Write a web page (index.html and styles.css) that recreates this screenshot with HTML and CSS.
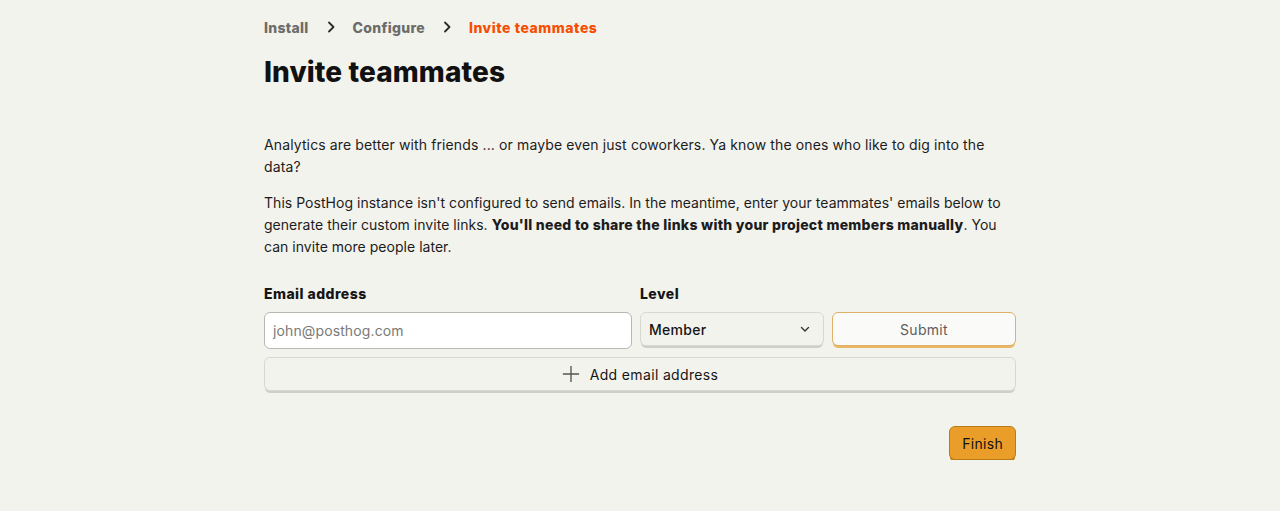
FILE: index.html
```html
<!DOCTYPE html>
<html lang="en">
<head>
<meta charset="utf-8">
<title>Invite teammates</title>
<link rel="stylesheet" href="styles.css">
</head>
<body>
<main class="page">
  <nav class="crumbs">
    <span class="crumb">Install</span>
    <svg class="chev" viewBox="0 0 16 16" width="16" height="16"><path d="M6 3.5 10.5 8 6 12.5" fill="none" stroke="currentColor" stroke-width="1.8" stroke-linecap="round" stroke-linejoin="round"/></svg>
    <span class="crumb">Configure</span>
    <svg class="chev" viewBox="0 0 16 16" width="16" height="16"><path d="M6 3.5 10.5 8 6 12.5" fill="none" stroke="currentColor" stroke-width="1.8" stroke-linecap="round" stroke-linejoin="round"/></svg>
    <span class="crumb active">Invite teammates</span>
  </nav>
  <h1 class="title">Invite teammates</h1>
  <section class="intro">
    <p class="p1">Analytics are better with friends ... or maybe even just coworkers. Ya know the ones who like to dig into the data?</p>
    <p class="p2">This PostHog instance isn't configured to send emails. In the meantime, enter your teammates' emails below to generate their custom invite links. <strong>You'll need to share the links with your project members manually</strong>. You can invite more people later.</p>
  </section>
  <form class="invite">
    <div class="row">
      <label class="label">Email address</label>
      <label class="label">Level</label>
      <span></span>
      <input class="email" type="text" placeholder="john@posthog.com">
      <div class="select">
        <span>Member</span>
        <svg viewBox="0 0 16 16" width="16" height="16"><path d="M4.5 6.5 8 10l3.5-3.5" fill="none" stroke="currentColor" stroke-width="1.4" stroke-linecap="round" stroke-linejoin="round"/></svg>
      </div>
      <button type="button" class="btn submit">Submit</button>
    </div>
    <button type="button" class="btn add">
      <svg viewBox="0 0 20 20" width="20" height="20"><path d="M10 1v18M1 10h18" fill="none" stroke="currentColor" stroke-width="1.5"/></svg>
      <span>Add email address</span>
    </button>
    <div class="footer">
      <button type="button" class="btn finish">Finish</button>
    </div>
  </form>
</main>
</body>
</html>
```
FILE: styles.css
```css
* { box-sizing: border-box; }
body {
  margin: 0;
  background: #f3f3ee;
  font-family: Inter, "Noto Sans", sans-serif;
  color: #151515;
  font-size: 14px;
}
.page {
  width: 752px;
  margin: 0 auto;
  padding-top: 16px;
}
.crumbs {
  display: flex;
  align-items: center;
  gap: 13px;
  height: 22px;
  font-weight: 800;
  font-size: 14px;
  letter-spacing: 0.3px;
  color: #6c6c6a;
}
.crumbs .chev { color: #2a2a2a; margin: 0 1px; }
.crumbs .crumb.active { color: #f54e00; letter-spacing: 0.55px; }
.title {
  margin: 14px 0 0;
  font-size: 28px;
  line-height: 40px;
  font-weight: 800;
  letter-spacing: 0.1px;
  color: #111;
}
.intro { margin-top: 42px; }
.intro p {
  margin: 0 0 14px;
  line-height: 22px;
  color: #1c1c1c;
}
.intro .p1 { letter-spacing: 0.12px; }
.intro .p2 { letter-spacing: 0.03px; }
.intro strong { font-weight: 800; letter-spacing: 0.27px; }
.invite { margin-top: 26px; }
.row {
  display: grid;
  grid-template-columns: 2fr 1fr 1fr;
  column-gap: 8px;
  row-gap: 8px;
  align-items: start;
}
.label {
  font-weight: 800;
  line-height: 20px;
  letter-spacing: 0.45px;
  color: #151515;
}
.email {
  height: 37px;
  border: 1px solid #b8b8b0;
  border-radius: 6px;
  background: #fff;
  padding: 0 8px;
  font: inherit;
  font-size: 14px;
  letter-spacing: 0.12px;
  color: #151515;
}
.email::placeholder { color: #7a7a78; }
.select {
  display: flex;
  align-items: center;
  justify-content: space-between;
  padding: 0 10px 0 8px;
  border: 1px solid #d8d8d2;
  border-radius: 6px;
  background: #f3f3ee;
  box-shadow: 0 3px 0 -1px #cfcfca;
  height: 34px;
  font-weight: 500;
  letter-spacing: 0.3px;
  color: #151515;
}
.select svg { color: #333; }
.btn {
  font: inherit;
  font-size: 14px;
  letter-spacing: 0.2px;
  border-radius: 6px;
  cursor: pointer;
}
.submit {
  height: 34px;
  border: 1px solid #deb068;
  background: #fafaf8;
  color: #5e5e5e;
  font-weight: 400;
  letter-spacing: 0.3px;
  box-shadow: 0 3px 0 -1px #eab764;
}
.add {
  margin-top: 8px;
  width: 100%;
  height: 34px;
  display: flex;
  align-items: center;
  justify-content: center;
  gap: 10px;
  border: 1px solid #d8d8d2;
  background: #f3f3ee;
  color: #151515;
  font-weight: 400;
  letter-spacing: 0.35px;
  box-shadow: 0 3px 0 -1px #cfcfca;
}
.add svg { color: #555; width: 18px; height: 18px; }
.footer {
  display: flex;
  justify-content: flex-end;
  margin-top: 35px;
}
.finish {
  height: 34px;
  padding: 0 12px;
  border: 1px solid #b97c14;
  background: #eb9d2a;
  color: #111;
  font-weight: 400;
  letter-spacing: 0.3px;
  box-shadow: 0 3px 0 -1px #b97c14;
}
```
